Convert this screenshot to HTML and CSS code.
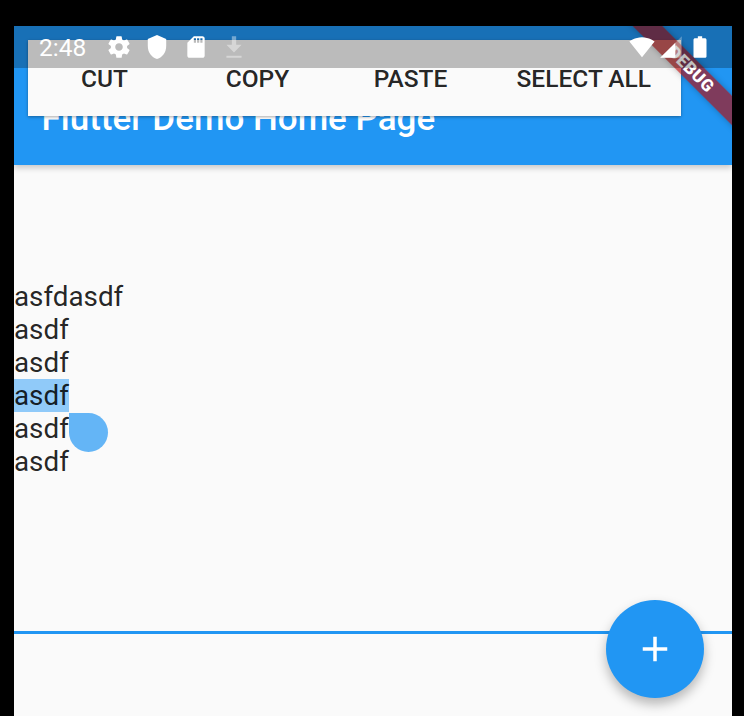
FILE: index.html
```html
<!DOCTYPE html>
<html lang="en">
<head>
  <meta charset="UTF-8">
  <title>Flutter Demo Home Page</title>
  <link rel="stylesheet" href="styles.css">
</head>
<body>
  <div class="screen">
    <header class="app-bar">
      <h1 class="app-title">Flutter Demo Home Page</h1>
    </header>

    <div class="toolbar">
      <div class="tool-btn">CUT</div>
      <div class="tool-btn">COPY</div>
      <div class="tool-btn">PASTE</div>
      <div class="tool-btn">SELECT ALL</div>
    </div>

    <div class="status-bar">
      <span class="time">2:48</span>
      <svg class="icon" viewBox="0 0 24 24"><path d="M19.43 12.98c.04-.32.07-.64.07-.98s-.03-.66-.07-.98l2.11-1.65c.19-.15.24-.42.12-.64l-2-3.46c-.12-.22-.39-.3-.61-.22l-2.49 1c-.52-.4-1.08-.73-1.69-.98l-.38-2.65C14.46 2.18 14.25 2 14 2h-4c-.25 0-.46.18-.49.42l-.38 2.65c-.61.25-1.17.59-1.69.98l-2.49-1c-.23-.09-.49 0-.61.22l-2 3.46c-.13.22-.07.49.12.64l2.11 1.65c-.04.32-.07.65-.07.98s.03.66.07.98l-2.11 1.65c-.19.15-.24.42-.12.64l2 3.46c.12.22.39.3.61.22l2.49-1c.52.4 1.08.73 1.69.98l.38 2.65c.03.24.24.42.49.42h4c.25 0 .46-.18.49-.42l.38-2.65c.61-.25 1.17-.59 1.69-.98l2.49 1c.23.09.49 0 .61-.22l2-3.46c.12-.22.07-.49-.12-.64l-2.11-1.65zM12 15.5c-1.93 0-3.5-1.57-3.5-3.5s1.57-3.5 3.5-3.5 3.5 1.57 3.5 3.5-1.57 3.5-3.5 3.5z"/></svg>
      <svg class="icon" viewBox="0 0 24 24"><path d="M12 1L3.5 4.5V11c0 5.55 3.4 10.74 8.5 12 5.1-1.26 8.5-6.45 8.5-12V4.5z"/></svg>
      <svg class="icon" viewBox="0 0 24 24"><path d="M18 2h-8L4.02 8 4 20c0 1.1.9 2 2 2h12c1.1 0 2-.9 2-2V4c0-1.1-.9-2-2-2zm-6 6h-2V4h2v4zm3 0h-2V4h2v4zm3 0h-2V4h2v4z"/></svg>
      <svg class="icon icon-faded" viewBox="0 0 24 24"><path d="M14 2h-4v8H5l7 7 7-7h-5zM5 20v2h14v-2z"/></svg>
      <div class="status-right">
        <svg class="icon" viewBox="0 0 24 24"><path d="M12.01 21.49L23.64 7c-.45-.34-4.93-4-11.64-4C5.28 3 .81 6.66.36 7l11.63 14.5.01.01.01-.01z"/></svg>
        <svg class="icon" viewBox="0 0 24 24"><path opacity=".3" d="M2 22h20V2z"/><path d="M16 8L2 22h14z"/></svg>
        <svg class="icon" viewBox="0 0 24 24"><path d="M16.5 4H14V2h-4v2H7.5C6.7 4 6 4.6 6 5.33v15.34C6 21.4 6.7 22 7.5 22h9c.8 0 1.5-.6 1.5-1.33V5.33C18 4.6 17.3 4 16.5 4z"/></svg>
      </div>
    </div>

    <main class="content">
      <div class="field-text">
        <div>asfdasdf</div>
        <div>asdf</div>
        <div>asdf</div>
        <div><span class="selected">asdf</span></div>
        <div><span class="handle-anchor">asdf<span class="handle"></span></span></div>
        <div>asdf</div>
      </div>
      <div class="field-line"></div>
    </main>

    <button class="fab">
      <svg class="fab-icon" viewBox="0 0 24 24"><path d="M19 13h-6v6h-2v-6H5v-2h6V5h2v6h6v2z"/></svg>
    </button>

    <div class="debug-banner">DEBUG</div>
  </div>
</body>
</html>
```

FILE: styles.css
```css
html, body {
  margin: 0;
  height: 100%;
  background: #000;
  overflow: hidden;
}

body {
  padding: 26px 12px 0 14px;
  box-sizing: border-box;
  font-family: Roboto, "Liberation Sans", sans-serif;
}

.screen {
  position: relative;
  display: flex;
  flex-direction: column;
  height: 690px;
  overflow: hidden;
  background: #fafafa;
}

.app-bar {
  flex: none;
  height: 139px;
  padding: 0 0 27px 27.5px;
  box-sizing: border-box;
  display: flex;
  align-items: flex-end;
  background: #2196f3;
  box-shadow: 0 3px 6px rgba(0, 0, 0, 0.2);
  z-index: 1;
}

.app-title {
  margin: 0;
  font-size: 35px;
  line-height: 38px;
  font-weight: 500;
  color: #fff;
}

/* text selection menu, sits on top of the app bar */
.toolbar {
  position: absolute;
  top: 14px;
  left: 14px;
  width: 653px;
  height: 76px;
  display: flex;
  background: #fafafa;
  box-shadow: 0 1px 3px rgba(0, 0, 0, 0.35);
  z-index: 2;
}

.tool-btn {
  flex: none;
  min-width: 153px;
  padding: 1px 29.5px 0;
  box-sizing: border-box;
  display: flex;
  align-items: center;
  justify-content: center;
  font-size: 24.5px;
  font-weight: 500;
  color: rgba(0, 0, 0, 0.87);
}

/* system bar is drawn over the app, debug banner included */
.status-bar {
  position: absolute;
  top: 0;
  left: 0;
  right: 0;
  height: 42px;
  padding: 0 19.5px 0 25px;
  display: flex;
  align-items: center;
  gap: 12.5px;
  background: rgba(0, 0, 0, 0.25);
  z-index: 4;
}

.time {
  margin-right: 7px;
  font-size: 24.5px;
  color: #fff;
}

.icon {
  width: 26px;
  height: 26px;
  fill: #fff;
}

.icon-faded {
  opacity: 0.4;
}

.status-right {
  margin-left: auto;
  display: flex;
  gap: 3px;
}

.content {
  flex: 1;
  padding-top: 115px;
}

.field-text {
  font-size: 27.8px;
  line-height: 33px;
  color: rgba(0, 0, 0, 0.87);
}

.selected {
  display: inline-block;
  background: #90caf9;
}

.handle-anchor {
  position: relative;
  display: inline-block;
}

.handle {
  position: absolute;
  top: 1px;
  left: 100%;
  width: 39px;
  height: 39px;
  background: #64b5f6;
  border-radius: 0 50% 50% 50%;
}

.field-line {
  height: 3px;
  margin-top: 153px;
  background: #2196f3;
}

.fab {
  position: absolute;
  top: 574px;
  left: 592px;
  width: 98px;
  height: 98px;
  padding: 0;
  border: 0;
  border-radius: 50%;
  display: flex;
  align-items: center;
  justify-content: center;
  background: #2196f3;
  box-shadow: 0 6px 12px rgba(0, 0, 0, 0.28);
  z-index: 2;
}

.fab-icon {
  width: 42px;
  height: 42px;
  fill: #fff;
}

.debug-banner {
  position: absolute;
  top: 32.5px;
  left: 576.5px;
  width: 200px;
  height: 21px;
  line-height: 21px;
  text-align: center;
  transform: rotate(45deg);
  background: rgba(178, 10, 10, 0.65);
  box-shadow: 0 0 6px rgba(0, 0, 0, 0.25);
  font-size: 17px;
  font-weight: 900;
  letter-spacing: 0.5px;
  color: #fff;
  z-index: 3;
}
```
